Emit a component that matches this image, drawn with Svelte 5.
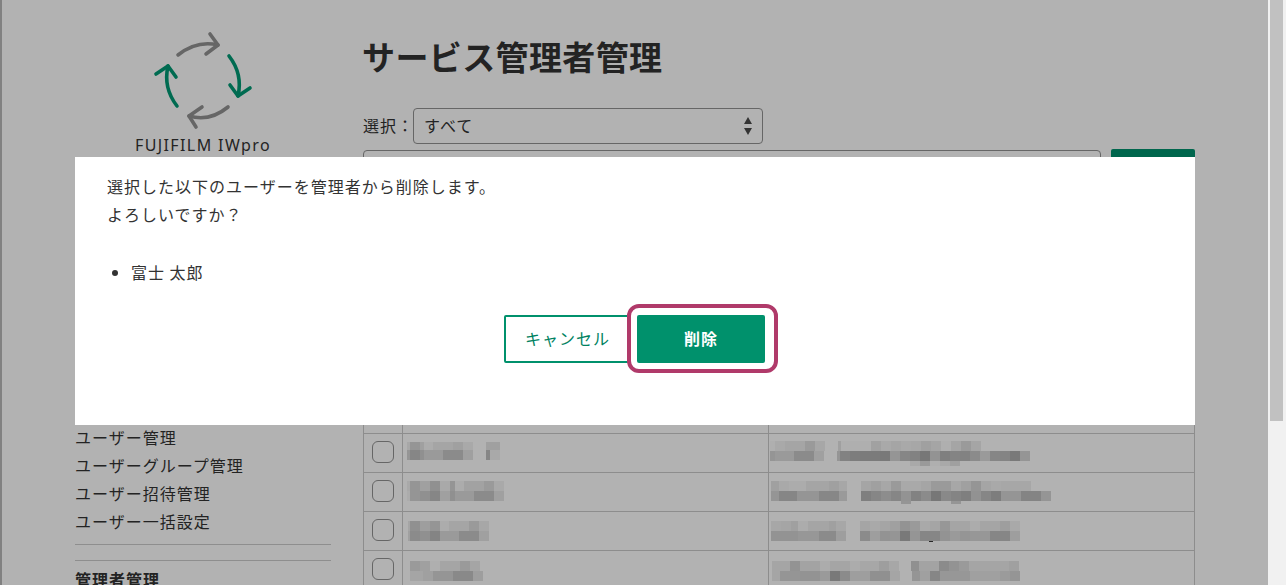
<script lang="ts">
  // blurred names and mail addresses: each strip is "width:grey" pairs, grey as seen on screen, 0 = gap
  const rows = [
    {
      name: { x: 4, y: 8, strips: [
        [8, '3:168 10:150 4:160 9:172 20:165 10:160 10:170 13:0 14:160'],
        [10, '3:150 10:135 4:145 19:155 20:140 10:160 13:0 4:135 10:170']
      ] },
      mail: { x: 1, y: 7, strips: [
        [10, '5:176 10:170 20:165 10:155 10:168 13:0 3:160 30:176 10:162 10:170 10:165 10:170 10:168 10:160 10:165 10:176 10:165 10:155 10:165'],
        [10, '5:150 19:155 20:140 10:160 13:0 3:150 10:130 10:125 20:124 10:122 10:150 10:135 10:130 10:120 10:148 10:128 10:132 10:130 10:140 10:155 10:135 10:132 10:122 10:150'],
        [5, '140:0 10:170 10:155 10:176 10:170 10:160']
      ] }
    },
    {
      name: { x: 4, y: 8, strips: [
        [10, '3:170 10:150 10:160 10:145 10:170 5:150 9:172 20:163 10:155 10:170'],
        [10, '3:172 10:150 10:145 10:135 10:160 5:145 19:155 20:140 10:160']
      ] },
      mail: { x: 2, y: 8, strips: [
        [10, '8:160 10:170 10:172 7:172 23:165 10:160 8:168 14:0 10:165 10:160 10:168 10:155 20:170 10:165 20:155 10:168 10:160 10:150 10:165 10:170 30:168'],
        [10, '8:150 18:135 22:150 20:136 8:155 14:0 10:128 10:135 10:142 10:135 10:148 10:130 10:140 10:120 10:138 10:132 10:128 10:146 10:135 10:125 20:150 20:132 10:150'],
        [3, '130:0 10:150 40:0 10:150']
      ] }
    },
    {
      name: { x: 5, y: 9, strips: [
        [10, '2:165 10:145 10:158 10:150 9:172 20:165 10:155 10:168'],
        [10, '2:160 10:140 10:145 10:132 19:155 20:140 10:160']
      ] },
      mail: { x: 2, y: 9, strips: [
        [10, '10:168 10:165 7:160 10:172 21:165 7:160 10:168 14:0 10:165 10:170 10:165 10:160 10:148 10:155 10:170 10:165 10:152 20:165 10:172 20:165 10:158 10:170'],
        [10, '27:148 21:152 17:140 10:158 14:0 10:140 10:158 10:148 10:150 10:122 10:150 20:135 10:148 10:155 10:150 20:152 20:135 10:158'],
        [1, '158:0 4:40']
      ] }
    },
    {
      name: { x: 7, y: 10, strips: [
        [10, '10:155 10:160 10:176 20:165 10:155 10:165'],
        [10, '13:165 10:160 20:150 20:138 10:158']
      ] },
      mail: { x: 3, y: 10, strips: [
        [10, '18:166 10:148 20:164 10:172 20:165 10:172 19:168 10:158 10:168 12:0 8:145 20:164 10:140 10:148 10:155 40:166 10:160'],
        [10, '8:166 20:150 20:148 10:155 10:122 10:140 20:158 20:145 10:165 12:0 8:150 10:160 10:135 30:152 30:160 10:156 10:150'],
      ] }
    }
  ];

  function cells(spec: string) {
    return spec.split(' ').map((c) => {
      const [w, v] = c.split(':').map(Number);
      const g = Math.round(v / 0.7);
      return { w, bg: v ? `rgb(${g},${g},${g})` : 'transparent' };
    });
  }

  const menu = ['ユーザー管理', 'ユーザーグループ管理', 'ユーザー招待管理', 'ユーザー一括設定'];
</script>

{#snippet mosaic(m)}
  <div class="mosaic" style="margin:{m.y}px 0 0 {m.x}px">
    {#each m.strips as [h, spec]}
      <div class="strip" style="height:{h}px">
        {#each cells(spec) as c}
          <span style="width:{c.w}px;background:{c.bg}"></span>
        {/each}
      </div>
    {/each}
  </div>
{/snippet}

<div class="screen">
  <div class="page">
    <aside class="side">
      <svg class="logo" viewBox="153 30 100 100" width="100" height="100" fill="none" stroke-width="3.6" stroke-linecap="round" stroke-linejoin="round">
        <g stroke="#929292">
          <path d="M178 55Q197 40 218 45" />
          <path d="M210 34L218 45L206 54" />
          <path d="M228 107Q210 122 189 116" />
          <path d="M202 107L189 116L196 127" />
        </g>
        <g stroke="#009a74">
          <path d="M229 56Q243 74 238 96" />
          <path d="M230 85L238 96L250 88" />
          <path d="M177 106Q163 88 168 66" />
          <path d="M156 74L168 66L176 77" />
        </g>
      </svg>
      <div class="brand">FUJIFILM IWpro</div>
      <nav class="menu">
        {#each menu as item}
          <div class="item">{item}</div>
        {/each}
      </nav>
      <div class="section">管理者管理</div>
    </aside>

    <main class="main">
      <h1>サービス管理者管理</h1>
      <div class="filter">
        <span class="label">選択：</span>
        <div class="select">
          <span class="label">すべて</span>
          <svg width="8" height="18" viewBox="0 0 8 18"><path d="M4 0L8 7H0ZM0 11H8L4 18Z" fill="#4a4a4a" /></svg>
        </div>
      </div>
      <div class="search">
        <div class="input"></div>
        <div class="go"></div>
      </div>
      <table>
        <colgroup><col class="c1" /><col class="c2" /><col /></colgroup>
        <tbody>
          <tr><td></td><td></td><td></td></tr>
          <tr><td></td><td></td><td></td></tr>
          {#each rows as row}
            <tr>
              <td><div class="check"></div></td>
              <td>{@render mosaic(row.name)}</td>
              <td>{@render mosaic(row.mail)}</td>
            </tr>
          {/each}
        </tbody>
      </table>
    </main>
  </div>

  <div class="scrollbar"><div class="thumb"></div></div>

  <div class="overlay">
    <div class="modal">
      <p>選択した以下のユーザーを管理者から削除します。<br />よろしいですか？</p>
      <ul><li>富士 太郎</li></ul>
      <div class="actions">
        <button class="cancel">キャンセル</button>
        <button class="danger">削除</button>
      </div>
    </div>
  </div>
</div>

<style>
  :global(body) {
    margin: 0;
    background: #fff;
  }

  .screen {
    position: relative;
    display: flex;
    height: 585px;
    overflow: hidden;
    font-family: "Noto Sans CJK JP", "Noto Sans", sans-serif;
    font-size: 16px;
    letter-spacing: 1px;
    line-height: 28px;
    color: #333;
  }

  .page {
    flex: 1;
    display: flex;
    gap: 32px;
    padding-left: 73px;
    border-left: 2px solid #b9b9b9;
  }

  .side {
    width: 256px;
    flex: none;
  }

  .logo {
    display: block;
    margin: 30px 0 0 78px;
  }

  .brand {
    margin-top: 1px;
    text-align: center;
    font-family: "Noto Sans", sans-serif;
    letter-spacing: 1.4px;
    line-height: 28px;
  }

  .menu {
    margin-top: 264px;
    padding-bottom: 9px;
    border-bottom: 1px solid #ccc;
  }

  .section {
    margin-top: 15px;
    padding-top: 4px;
    border-top: 1px solid #ccc;
    font-weight: 700;
  }

  .main {
    width: 832px;
    flex: none;
  }

  h1 {
    margin: 0 0 0 -1px;
    padding-top: 32px;
    font-size: 33px;
    line-height: 48px;
    letter-spacing: 0.39px;
    font-weight: 700;
  }

  .filter {
    display: flex;
    align-items: center;
    margin-top: 28px;
  }

  .label {
    padding-bottom: 2px;
  }

  .select {
    box-sizing: border-box;
    flex: none;
    width: 350px;
    height: 36px;
    display: flex;
    align-items: center;
    justify-content: space-between;
    padding: 0 10px;
    border: 1px solid #929292;
    border-radius: 4px;
    margin-left: -1px;
  }

  .search {
    display: flex;
    justify-content: space-between;
    align-items: flex-start;
    margin-top: 5px;
  }

  .input {
    box-sizing: border-box;
    width: 738px;
    height: 40px;
    margin-top: 1px;
    border: 1px solid #929292;
    border-radius: 4px;
  }

  .go {
    width: 84px;
    height: 40px;
    border-radius: 2px;
    background: #00926f;
  }

  table {
    width: 832px;
    margin-top: 165px;
    border-collapse: collapse;
    table-layout: fixed;
  }

  .c1 {
    width: 39px;
  }

  .c2 {
    width: 366px;
  }

  td {
    height: 38px;
    padding: 0;
    border: 1px solid #cbcbcb;
    vertical-align: top;
  }

  .check {
    box-sizing: border-box;
    width: 22px;
    height: 22px;
    margin: 7px 0 0 8px;
    border: 1px solid #929292;
    border-radius: 6px;
  }

  .mosaic {
    display: flex;
    flex-direction: column;
  }

  .strip {
    display: flex;
  }

  .strip span {
    flex: none;
  }

  .scrollbar {
    width: 18px;
    flex: none;
    background: #f1f1f1;
  }

  .thumb {
    width: 13px;
    height: 421px;
    margin-left: 2px;
    background: #c1c1c1;
  }

  .overlay {
    position: absolute;
    top: 0;
    left: 0;
    right: 18px;
    bottom: 0;
    background: rgba(0, 0, 0, 0.3);
  }

  .modal {
    box-sizing: border-box;
    width: 1120px;
    height: 268px;
    margin: 157px 0 0 75px;
    padding: 15px 32px 0;
    background: #fff;
  }

  p {
    margin: 0;
  }

  ul {
    margin: 30px 0 0;
    padding-left: 24px;
  }

  .actions {
    display: flex;
    justify-content: center;
    gap: 6px;
    margin-top: 29px;
    padding-right: 1px;
  }

  button {
    box-sizing: border-box;
    height: 48px;
    padding: 0 0 2px;
    border-radius: 2px;
    font: inherit;
    letter-spacing: inherit;
  }

  .cancel {
    width: 127px;
    border: 2px solid #00916c;
    background: #fff;
    color: #00825f;
  }

  .danger {
    position: relative;
    width: 128px;
    border: none;
    background: #00916c;
    color: #fff;
    font-weight: 700;
  }

  .danger::after {
    content: "";
    position: absolute;
    top: -11px;
    left: -10px;
    right: -13px;
    bottom: -10px;
    border: 4px solid #b03a6a;
    border-radius: 12px;
  }
</style>
